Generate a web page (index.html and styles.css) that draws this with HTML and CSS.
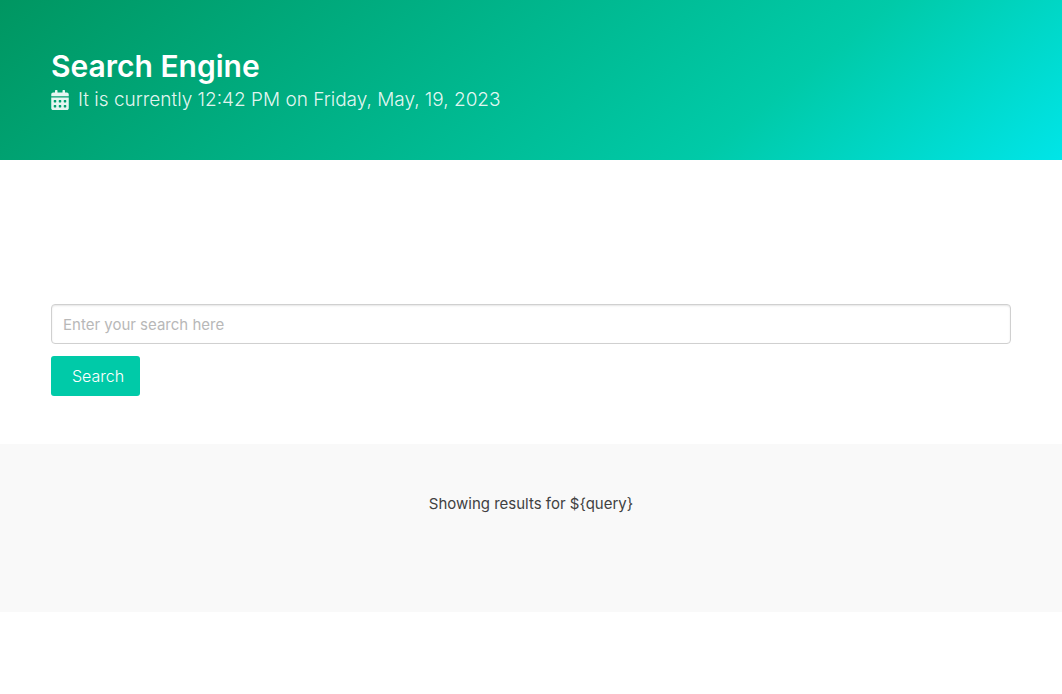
FILE: index.html
```html
<!DOCTYPE html>
<html lang="en">
<head>
<meta charset="utf-8">
<meta name="viewport" content="width=device-width, initial-scale=1">
<title>Search Engine</title>
<link rel="stylesheet" href="styles.css">
</head>
<body>
<header class="hero">
  <div class="container">
    <h1 class="title">Search Engine</h1>
    <p class="subtitle">
      <svg class="icon" viewBox="0 0 448 512" aria-hidden="true"><path fill="currentColor" fill-rule="evenodd" d="M0 464c0 26.500 21.500 48 48 48h352c26.500 0 48-21.500 48-48V192H0v272zM320 268c0-6.600 5.400-12 12-12h40c6.600 0 12 5.400 12 12v40c0 6.600-5.400 12-12 12h-40c-6.600 0-12-5.400-12-12v-40zm0 128c0-6.600 5.400-12 12-12h40c6.600 0 12 5.400 12 12v40c0 6.600-5.400 12-12 12h-40c-6.600 0-12-5.400-12-12v-40zM192 268c0-6.600 5.400-12 12-12h40c6.600 0 12 5.400 12 12v40c0 6.600-5.400 12-12 12h-40c-6.600 0-12-5.400-12-12v-40zm0 128c0-6.600 5.400-12 12-12h40c6.600 0 12 5.400 12 12v40c0 6.600-5.400 12-12 12h-40c-6.600 0-12-5.400-12-12v-40zM64 268c0-6.600 5.400-12 12-12h40c6.600 0 12 5.400 12 12v40c0 6.600-5.400 12-12 12H76c-6.600 0-12-5.400-12-12v-40zm0 128c0-6.600 5.400-12 12-12h40c6.600 0 12 5.400 12 12v40c0 6.600-5.400 12-12 12H76c-6.600 0-12-5.400-12-12v-40zM400 64h-48V16c0-8.800-7.200-16-16-16h-32c-8.800 0-16 7.200-16 16v48H160V16c0-8.800-7.200-16-16-16h-32c-8.800 0-16 7.200-16 16v48H48C21.500 64 0 85.500 0 112v48h448v-48c0-26.500-21.500-48-48-48z"/></svg>
      <span>It is currently 12:42 PM on Friday, May, 19, 2023</span>
    </p>
  </div>
</header>
<main>
  <section class="search">
    <form class="container">
      <input class="input" type="text" placeholder="Enter your search here" aria-label="Search query">
      <button class="button" type="button">Search</button>
    </form>
  </section>
  <section class="results">
    <p>Showing results for ${query}</p>
  </section>
</main>
</body>
</html>
```
FILE: styles.css
```css
*, *::before, *::after {
  box-sizing: border-box;
}

body {
  margin: 0;
  background: #fff;
  color: #414141;
  font-family: Inter, "Liberation Sans", sans-serif;
  font-size: 15px;
  line-height: 24px;
}

.container {
  max-width: 960px;
  margin: 0 auto;
}

.hero {
  padding: 48px 24px;
  color: #fff;
  background: linear-gradient(141deg, #009661 0%, #00caa8 71%, #00e5e8 100%);
}

.title {
  margin: 0;
  font-size: 30px;
  font-weight: 600;
  line-height: 36px;
}

.subtitle {
  display: flex;
  align-items: center;
  gap: 9px;
  margin: 0;
  padding: 4px 0 0;
  color: rgba(255, 255, 255, 0.9);
  font-size: 19px;
  font-weight: 300;
  line-height: 24px;
}

.icon {
  width: 18px;
  height: 20px;
}

.search {
  padding: 144px 24px 48px;
}

.input {
  display: block;
  width: 100%;
  height: 40px;
  margin: 0 0 12px;
  padding: 0 11px;
  border: 1px solid #d0d0d0;
  border-radius: 4px;
  color: #363636;
  background: #fff;
  box-shadow: inset 0 1px 2px rgba(10, 10, 10, 0.1);
  font: inherit;
}

.input::placeholder {
  color: #b8b8b8;
  opacity: 1;
}

.button {
  height: 40px;
  padding: 0 16px 0 21px;
  border: 0;
  border-radius: 3px;
  color: #fff;
  background: #00caa8;
  font: inherit;
  font-size: 16px;
  font-weight: 300;
}

.results {
  padding: 48px 24px 96px;
  background: #f9f9f9;
  text-align: center;
}

.results p {
  margin: 0;
}
```
